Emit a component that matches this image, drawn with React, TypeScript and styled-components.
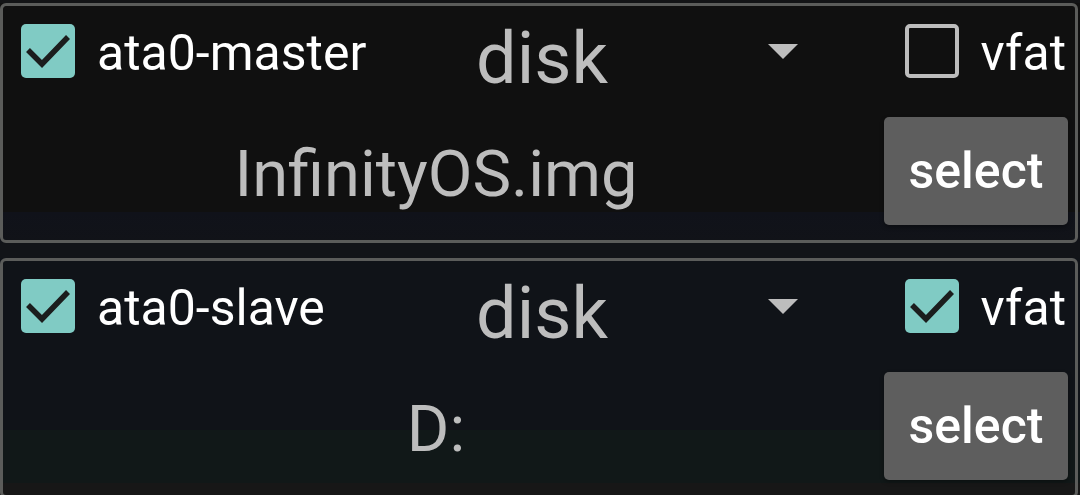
import styled, { createGlobalStyle } from 'styled-components';

const GlobalStyle = createGlobalStyle`
  html, body {
    margin: 0;
    padding: 0;
    height: 100%;
    overflow: hidden;
  }

  body {
    background: linear-gradient(
      to bottom,
      #131416 0px,
      #131416 3px,
      #101010 3px,
      #101010 212px,
      #10121a 212px,
      #111318 243px,
      #121418 243px,
      #121418 258px,
      #101318 258px,
      #101318 430px,
      #111818 430px,
      #111818 483px,
      #171717 483px,
      #171717 100%
    );
    font-family: Roboto, 'Noto Sans', sans-serif;
  }
`;

const colors = {
  TEAL: '#80cbc4',
  BORDER: '#5b5c5a',
  GREY_TEXT: '#bdbdbd',
  WHITE: '#ffffff',
  BUTTON: '#5e5e5e',
  CHECK: '#1b1d1d',
};

const S = {
  Page: styled.div`
    display: flex;
    flex-direction: column;
    gap: 15px;
    padding-top: 3px;
    width: 1078px;
  `,

  Card: styled.section`
    border: 3px solid ${colors.BORDER};
    border-radius: 6px;
    box-sizing: border-box;
    display: flex;
    flex-direction: column;
    flex-shrink: 0;
    gap: 39px;
    height: 240px;
    padding: 18px 7px 15px 18px;
  `,

  TopRow: styled.div`
    align-items: center;
    display: grid;
    grid-template-columns: 359px 430px 1fr;
    grid-template-rows: 54px;
  `,

  Toggle: styled.label<{ $end?: boolean }>`
    align-items: center;
    color: ${colors.WHITE};
    display: flex;
    font-size: 50px;
    gap: 22px;
    justify-self: ${({ $end }) => ($end ? 'end' : 'start')};
    line-height: 1;
    padding-right: ${({ $end }) => ($end ? '2px' : '0')};
    white-space: nowrap;

    > span:last-child {
      margin-top: 4px;
    }
  `,

  Box: styled.span<{ $checked: boolean }>`
    align-items: center;
    background-color: ${({ $checked }) => ($checked ? colors.TEAL : 'transparent')};
    border: ${({ $checked }) => ($checked ? 'none' : `4px solid ${colors.GREY_TEXT}`)};
    border-radius: 5px;
    box-sizing: border-box;
    display: flex;
    flex-shrink: 0;
    height: 54px;
    justify-content: center;
    width: 54px;
  `,

  Spinner: styled.div`
    align-items: center;
    display: flex;
    height: 54px;
    padding-right: 12px;
  `,

  SpinnerValue: styled.span`
    color: ${colors.GREY_TEXT};
    flex: 1;
    font-size: 72px;
    line-height: 1;
    margin: 15px 64px 0 0;
    text-align: center;
  `,

  BottomRow: styled.div`
    align-items: center;
    display: flex;
    height: 108px;
  `,

  FileName: styled.span`
    color: ${colors.GREY_TEXT};
    flex: 1;
    font-size: 65px;
    line-height: 1;
    margin-top: 6px;
    text-align: center;
  `,

  SelectButton: styled.button`
    all: unset;
    align-items: center;
    background-color: ${colors.BUTTON};
    border-radius: 5px;
    box-shadow: 0 2px 4px rgba(0, 0, 0, 0.35);
    color: ${colors.WHITE};
    display: flex;
    font-family: Roboto, sans-serif;
    font-size: 50px;
    font-weight: 500;
    height: 108px;
    justify-content: center;
    margin-left: 33px;
    width: 184px;
  `,
};

function Check({ checked }: { checked: boolean }) {
  return (
    <S.Box $checked={checked}>
      {checked && (
        <svg width="54" height="54" viewBox="0 0 54 54">
          <polyline
            points="7,26 21,40 47,13"
            fill="none"
            stroke={colors.CHECK}
            strokeWidth="5.5"
          />
        </svg>
      )}
    </S.Box>
  );
}

const drives = [
  { name: 'ata0-master', type: 'disk', vfat: false, path: 'InfinityOS.img' },
  { name: 'ata0-slave', type: 'disk', vfat: true, path: 'D:' },
];

export default function App() {
  return (
    <>
      <GlobalStyle />
      <S.Page>
        {drives.map((drive) => (
          <S.Card key={drive.name}>
            <S.TopRow>
              <S.Toggle>
                <Check checked />
                <span>{drive.name}</span>
              </S.Toggle>
              <S.Spinner>
                <S.SpinnerValue>{drive.type}</S.SpinnerValue>
                <svg width="30" height="15" viewBox="0 0 30 15">
                  <polygon points="0,0 30,0 15,15" fill={colors.GREY_TEXT} />
                </svg>
              </S.Spinner>
              <S.Toggle $end>
                <Check checked={drive.vfat} />
                <span>vfat</span>
              </S.Toggle>
            </S.TopRow>
            <S.BottomRow>
              <S.FileName>{drive.path}</S.FileName>
              <S.SelectButton type="button">select</S.SelectButton>
            </S.BottomRow>
          </S.Card>
        ))}
      </S.Page>
    </>
  );
}
